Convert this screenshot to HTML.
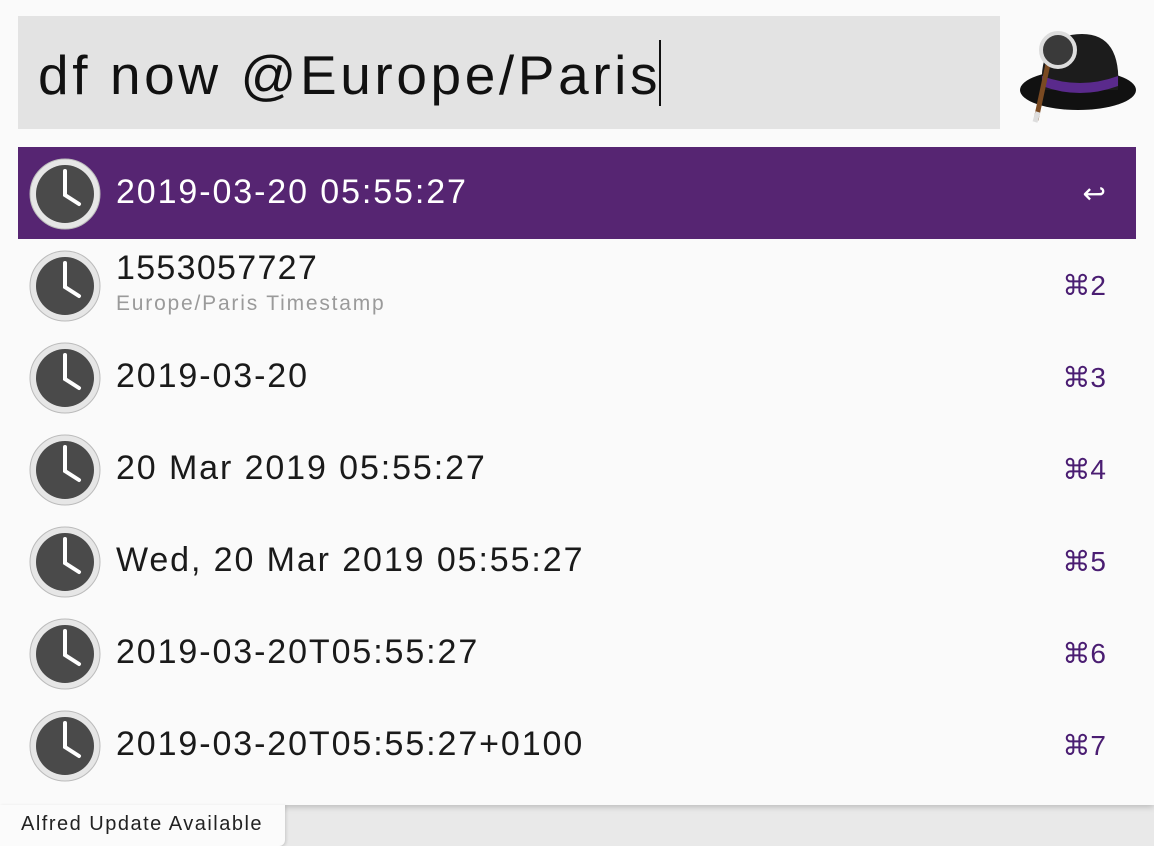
<!DOCTYPE html>
<html><head><meta charset="utf-8"><style>
html,body{margin:0;padding:0;}
body{width:1154px;height:846px;overflow:hidden;background:#e9e9e9;font-family:"Liberation Sans",sans-serif;position:relative;}
.win{position:absolute;left:0;top:0;width:1154px;height:805px;background:#fafafa;box-shadow:0 2px 6px rgba(0,0,0,.2);}
.search{position:absolute;left:18px;top:16px;width:982px;height:113px;background:#e3e3e3;}
.search span{position:absolute;left:20px;top:24px;font-size:55px;color:#111;letter-spacing:3.6px;white-space:nowrap;}
.caret{display:inline-block;width:2px;height:66px;background:#111;vertical-align:-12px;margin-left:-2px;}
.row{position:absolute;left:18px;width:1118px;height:92px;}
.row.sel{background:#562572;}
.row svg{position:absolute;left:10px;top:10px;}
.t{position:absolute;left:98px;font-size:34px;color:#1a1a1a;letter-spacing:1.9px;white-space:nowrap;}
.sel .t{color:#fff;}
.sub{position:absolute;left:98px;top:53px;font-size:21px;color:#9a9a9a;letter-spacing:1.8px;}
.k{position:absolute;right:30px;top:30px;font-size:28px;color:#4a1d72;}
.badge{position:absolute;left:0;top:805px;width:285px;height:41px;background:#fbfbfb;border-radius:0 0 6px 0;box-shadow:1px 1px 3px rgba(0,0,0,.15);}
.badge span{position:absolute;left:21px;top:8px;font-size:20px;color:#222;letter-spacing:1.5px;white-space:nowrap;}
</style></head><body>
<div class="win">
<div class="search"><span>df now @Europe/Paris<i class="caret"></i></span></div>
<svg style="position:absolute;left:1018px;top:28px" width="120" height="96" viewBox="0 0 120 96">
<ellipse cx="60" cy="62" rx="58" ry="20" fill="#111"/>
<path d="M24 62 Q20 6 64 6 Q104 6 100 62 Z" fill="#1c1c1c"/>
<path d="M24 48 Q62 62 100 48 L100 58 Q62 72 24 58 Z" fill="#5a2a8c"/>
<line x1="30" y1="36" x2="18" y2="92" stroke="#7a4a22" stroke-width="5"/>
<line x1="20" y1="84" x2="17" y2="94" stroke="#ddd" stroke-width="5"/>
<circle cx="40" cy="22" r="17" fill="#3a3a3a" stroke="#ddd" stroke-width="4"/>
</svg>
<div class="row sel" style="top:147px"><svg width="74" height="74" viewBox="0 0 74 74"><circle cx="37" cy="37" r="35" fill="#e6e6e6" stroke="#bbb"/><circle cx="37" cy="37" r="29" fill="#4a4a4a"/><path d="M37 14 V38 L51 47" stroke="#fff" stroke-width="4" fill="none" stroke-linecap="round"/></svg><div class="t" style="top:26px">2019-03-20 05:55:27</div><div class="k" style="color:#fff">↩</div></div>
<div class="row" style="top:239px"><svg width="74" height="74" viewBox="0 0 74 74"><circle cx="37" cy="37" r="35" fill="#e6e6e6" stroke="#bbb"/><circle cx="37" cy="37" r="29" fill="#4a4a4a"/><path d="M37 14 V38 L51 47" stroke="#fff" stroke-width="4" fill="none" stroke-linecap="round"/></svg><div class="t" style="top:10px;letter-spacing:1.3px">1553057727</div><div class="sub">Europe/Paris Timestamp</div><div class="k">⌘2</div></div>
<div class="row" style="top:331px"><svg width="74" height="74" viewBox="0 0 74 74"><circle cx="37" cy="37" r="35" fill="#e6e6e6" stroke="#bbb"/><circle cx="37" cy="37" r="29" fill="#4a4a4a"/><path d="M37 14 V38 L51 47" stroke="#fff" stroke-width="4" fill="none" stroke-linecap="round"/></svg><div class="t" style="top:26px">2019-03-20</div><div class="k">⌘3</div></div>
<div class="row" style="top:423px"><svg width="74" height="74" viewBox="0 0 74 74"><circle cx="37" cy="37" r="35" fill="#e6e6e6" stroke="#bbb"/><circle cx="37" cy="37" r="29" fill="#4a4a4a"/><path d="M37 14 V38 L51 47" stroke="#fff" stroke-width="4" fill="none" stroke-linecap="round"/></svg><div class="t" style="top:26px">20 Mar 2019 05:55:27</div><div class="k">⌘4</div></div>
<div class="row" style="top:515px"><svg width="74" height="74" viewBox="0 0 74 74"><circle cx="37" cy="37" r="35" fill="#e6e6e6" stroke="#bbb"/><circle cx="37" cy="37" r="29" fill="#4a4a4a"/><path d="M37 14 V38 L51 47" stroke="#fff" stroke-width="4" fill="none" stroke-linecap="round"/></svg><div class="t" style="top:26px">Wed, 20 Mar 2019 05:55:27</div><div class="k">⌘5</div></div>
<div class="row" style="top:607px"><svg width="74" height="74" viewBox="0 0 74 74"><circle cx="37" cy="37" r="35" fill="#e6e6e6" stroke="#bbb"/><circle cx="37" cy="37" r="29" fill="#4a4a4a"/><path d="M37 14 V38 L51 47" stroke="#fff" stroke-width="4" fill="none" stroke-linecap="round"/></svg><div class="t" style="top:26px">2019-03-20T05:55:27</div><div class="k">⌘6</div></div>
<div class="row" style="top:699px"><svg width="74" height="74" viewBox="0 0 74 74"><circle cx="37" cy="37" r="35" fill="#e6e6e6" stroke="#bbb"/><circle cx="37" cy="37" r="29" fill="#4a4a4a"/><path d="M37 14 V38 L51 47" stroke="#fff" stroke-width="4" fill="none" stroke-linecap="round"/></svg><div class="t" style="top:26px">2019-03-20T05:55:27+0100</div><div class="k">⌘7</div></div>
</div>
<div class="badge"><span>Alfred Update Available</span></div>
</body></html>
